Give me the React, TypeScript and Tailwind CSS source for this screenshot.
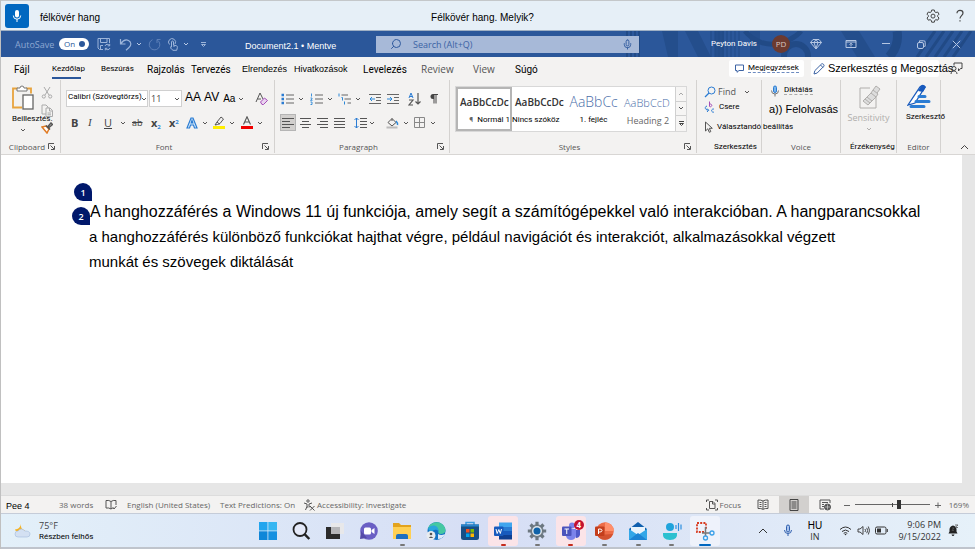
import React from "react";
import { Search, Mic } from "lucide-react";

type IconProps = { box: string; className: string; children: React.ReactNode };

function Icon({ box, className, children }: IconProps) {
  return (
    <svg viewBox={box} className={`shrink-0 ${className}`} fill="none" stroke="currentColor" strokeWidth="1" aria-hidden="true">
      {children}
    </svg>
  );
}

function Chevron({ className = "text-[#555]" }: { className?: string }) {
  return (
    <Icon box="0 0 6 6" className={`size-[6px] ${className}`}>
      <path d="M1 2l2 2 2-2" />
    </Icon>
  );
}

function Launcher() {
  return (
    <button type="button" aria-label="More options" className="text-[#555]">
      <Icon box="0 0 7 7" className="size-[7px]">
        <path d="M.5 6V.5H6M2.500 2.500l3.500 3.500M6.500 3v3.500H3" />
      </Icon>
    </button>
  );
}

function VoiceBar() {
  return (
    <header className="flex h-[31px] shrink-0 items-center border-t border-b border-t-[#c4c7ca] border-b-[#9fb0c4] bg-[#e6eff7] px-1 text-[10px] leading-none text-black">
      <button type="button" aria-label="Microphone" className="grid size-6 place-items-center rounded-[3px] bg-[#0067c0]">
        <Icon box="0 0 12 14" className="h-[14px] w-3 text-white">
          <rect x="4" y="1" width="4" height="7.500" rx="2" fill="currentColor" stroke="none" />
          <path d="M2.300 6.500a3.700 3.700 0 0 0 7.400 0M6 10.200V13" />
        </Icon>
      </button>
      <p className="w-0 flex-1 pt-1 pl-[11px] font-['Liberation_Sans',sans-serif] whitespace-nowrap">félkövér hang</p>
      <p className="pt-1 pr-10 font-['Liberation_Sans',sans-serif] whitespace-nowrap">Félkövér hang. Melyik?</p>
      <div className="flex w-0 flex-1 items-center justify-end gap-[15px] pr-[6px] text-[#444]">
        <button type="button" aria-label="Settings">
          <Icon box="0 0 14 14" className="size-[14px]">
            <path d="M5.700 1h2.600l.4 1.800 1.200.7 1.800-.5L13 5.200 11.700 6.500v1.200L13 9l-1.300 2.200-1.800-.5-1.200.7-.4 1.800H5.700l-.4-1.800-1.200-.7-1.800.5L1 9l1.300-1.300V6.500L1 5.200 2.300 3l1.800.5 1.200-.7z" strokeLinejoin="round" />
            <circle cx="7" cy="7.100" r="2" />
          </Icon>
        </button>
        <button type="button" aria-label="Help">
          <Icon box="0 0 10 14" className="h-[14px] w-[10px]">
            <path d="M2 4.200C2 2.300 3.300 1.400 5 1.400s3 1 3 2.700C8 6.500 5 6.700 5 9.500M5 11.200v1.400" strokeWidth="1.200" />
          </Icon>
        </button>
      </div>
    </header>
  );
}

function TitlePattern() {
  return (
    <svg viewBox="0 0 350 26" className="absolute top-0 right-0 h-[26px] w-[350px]" fill="none" stroke="#214a86" aria-hidden="true">
      <path d="M2 0v26M6 0v26M10 0v26M14 0v26" strokeWidth="2" />
      <path d="M37 0h16v26H43zM60 0h13l13 26H73zM90 0h9v26h-9z" fill="#244e8c" stroke="none" />
      <path d="M86 0v26M90 0v26M94 0v26M98 0v26M102 0v26M106 0v26M110 0v26M114 0v26" strokeWidth="1" />
      <path d="M125 0v26h10V0" fill="#244e8c" stroke="none" />
      <circle cx="171" cy="25" r="12" strokeWidth="6" />
      <path d="M120 0c8 10 22 16 36 12S176 0 176 0" strokeWidth="5" />
      <path d="M216 0h18l16 26h-18z" fill="#244e8c" stroke="none" />
      <path d="M272 0c2 10-2 20-8 26" strokeWidth="9" />
      <path d="M292 26l18-26M301 26l18-26M310 26l18-26M319 26l18-26M328 26l18-26" strokeWidth="3" />
    </svg>
  );
}

function TitleBar() {
  return (
    <div className="relative flex h-[26px] shrink-0 items-center bg-[#2b579a] text-[#9db5da]">
      <TitlePattern />
      <div className="relative flex w-[375px] shrink-0 items-center">
        <label className="flex items-center gap-1 pl-[14px] text-[9px] leading-none text-[#8ea8d2]">
          <span className="w-10 whitespace-nowrap">AutoSave</span>
          <span className="relative flex">
            <input type="checkbox" role="switch" defaultChecked className="h-3 w-[30px] appearance-none rounded-full bg-white" />
            <span className="absolute top-[2px] left-[5px] text-[8px] leading-none text-[#2b579a]">On</span>
            <span className="absolute top-[3px] right-1 size-[6px] rounded-full bg-[#2b579a]" />
          </span>
        </label>
        <button type="button" aria-label="Save" className="ml-2">
          <Icon box="0 0 14 14" className="size-[14px]">
            <path d="M6 12.500H2.500L1 11V1.500h11.500V6M3.500 1.500v4h6.500v-4M3.500 12V8.500H6M8 9a2.500 2.500 0 0 1 4.500-.5M12.700 6.800v2h-2M13 11a2.500 2.500 0 0 1-4.500.5M8.300 13.300v-2h2" />
          </Icon>
        </button>
        <button type="button" aria-label="Undo" className="ml-2 flex items-center gap-1">
          <Icon box="0 0 13 13" className="size-[13px]">
            <path d="M1.500 1v5h5M1.700 5.800C4 2.500 7 1.300 9.500 2.500c3 1.500 3 5 .5 7L7 12.300" strokeWidth="1.200" />
          </Icon>
          <Chevron className="text-[#b8c9e6]" />
        </button>
        <button type="button" aria-label="Redo" className="ml-[6px] text-[#5d80b8]">
          <Icon box="0 0 13 13" className="size-[13px]">
            <path d="M4.500 1.700A5.300 5.300 0 1 0 9.500 2.200M9 5V1.500h3.500" />
          </Icon>
        </button>
        <button type="button" aria-label="Touch mode" className="ml-[6px] flex items-center gap-1">
          <Icon box="0 0 12 13" className="h-[13px] w-3">
            <path d="M2.500 6.500A3.500 3.500 0 1 1 8 6M4.500 9V4a1 1 0 0 1 2 0v3l3 .8c1 .3 1 1 .8 2l-.6 2.500H6L3 9.500q.5-1 1.500-.3M7 7v2" />
          </Icon>
          <Chevron className="text-[#b8c9e6]" />
        </button>
        <button type="button" aria-label="Customize toolbar" className="ml-[11px]">
          <Icon box="0 0 7 7" className="size-[7px]">
            <path d="M1 1.500h5M1.500 3.500l2 2 2-2z" />
          </Icon>
        </button>
        <h1 className="ml-[38px] pt-1 font-['Liberation_Sans',sans-serif] text-[9px] leading-none whitespace-nowrap text-white">Document2.1 • Mentve</h1>
      </div>
      <label className="relative flex h-[17px] min-w-0 flex-1 items-center gap-[11px] bg-[#a7b9d8] px-[14px] text-[#2f5a9e]">
        <Search className="size-[12px] -scale-x-100" strokeWidth={2} />
        <input type="text" aria-label="Search" placeholder="Search (Alt+Q)" className="w-0 flex-1 bg-transparent text-[9px] leading-none outline-none placeholder:text-[#3c63a4] placeholder:opacity-100" />
        <Mic className="-mr-2 size-[11px]" strokeWidth={2} />
      </label>
      <div className="relative flex w-[336px] shrink-0 items-center justify-end pr-[14px] text-[#b5c6e2]">
        <span className="font-[Roboto,sans-serif] text-[8px] leading-none whitespace-nowrap text-white">Peyton Davis</span>
        <span className="ml-[15px] grid size-[18px] place-items-center rounded-full bg-[#6c3a30] text-[8px] leading-none text-[#d9c5c0]">PD</span>
        <button type="button" aria-label="Premium" className="ml-5">
          <Icon box="0 0 12 12" className="size-3">
            <path d="M3 1.500h6l2.500 3L6 11 .5 4.500zM.5 4.500h11M4 4.500l2 6 2-6-2-3z" />
          </Icon>
        </button>
        <button type="button" aria-label="Ribbon display" className="ml-[23px]">
          <Icon box="0 0 12 10" className="h-[10px] w-3">
            <path d="M1 1.500h10v7H1zM1 3h10M6 7.500V4.500M4.500 5.700L6 4.200l1.500 1.500" />
          </Icon>
        </button>
        <button type="button" aria-label="Minimize" className="ml-[25px]">
          <Icon box="0 0 8 8" className="size-2"><path d="M0 3.500h8" /></Icon>
        </button>
        <button type="button" aria-label="Restore" className="ml-[27px]">
          <Icon box="0 0 9 9" className="size-[9px]">
            <rect x=".5" y="2.500" width="6" height="6" rx="1.500" /><path d="M2.500 2V.8h4a1.500 1.500 0 0 1 1.700 1.500v4H7" />
          </Icon>
        </button>
        <button type="button" aria-label="Close" className="ml-[26px]">
          <Icon box="0 0 9 9" className="size-[9px]"><path d="M.8.8l7.400 7.400M8.200.8L.8 8.200" /></Icon>
        </button>
      </div>
    </div>
  );
}

const hu = "font-[Roboto,sans-serif] text-black";

const tabs = [
  { label: "Fájl", className: "w-[38px] text-[10px] pt-[2px] " + hu },
  { label: "Kezdőlap", className: "w-[49px] text-[8px] " + hu, active: true },
  { label: "Beszúrás", className: "w-[46px] text-[8px] " + hu },
  { label: "Rajzolás", className: "w-[44px] text-[10px] pt-[2px] " + hu },
  { label: "Tervezés", className: "w-[51px] text-[10px] pt-[2px] " + hu },
  { label: "Elrendezés", className: "w-[52px] text-[9px] pt-[2px] text-black font-['Liberation_Sans',sans-serif]" },
  { label: "Hivatkozások", className: "w-[69px] text-[9px] pt-[2px] text-black font-['Liberation_Sans',sans-serif]" },
  { label: "Levelezés", className: "w-[58px] text-[10px] pt-[2px] " + hu },
  { label: "Review", className: "w-[52px] text-[10px] text-[#555]" },
  { label: "View", className: "w-[42px] text-[10px] text-[#555]" },
  { label: "Súgó", className: "w-[42px] text-[10px] pt-[2px] " + hu },
];

function TabRow() {
  return (
    <nav className="flex h-[23px] shrink-0 items-center pl-[13px] leading-none">
      {tabs.map((t) => (
        <button key={t.label} type="button" className={`relative h-[23px] shrink-0 text-left whitespace-nowrap ${t.className}`}>
          {t.label}
          {t.active && <span className="absolute bottom-[1px] left-0 h-[2px] w-[29px] bg-[#2b579a]" />}
        </button>
      ))}
      <div className="ml-auto flex items-center gap-[7px] pr-3">
        <button type="button" className="flex h-[17px] w-[75px] items-center gap-1 rounded-[2px] bg-white pl-[6px]">
          <Icon box="0 0 9 9" className="size-[9px] text-[#3c63a4]"><path d="M.5 1h8v5.500H4L2 8.300V6.500H.5z" /></Icon>
          <span className="border-b border-dashed border-[#6d8bc0] font-[Roboto,sans-serif] text-[8px] whitespace-nowrap">Megjegyzések</span>
        </button>
        <button type="button" className="flex h-[17px] w-[128px] items-center gap-[3px] rounded-[2px] bg-white pl-[2px]">
          <Icon box="0 0 12 12" className="size-3 text-[#3c63a4]"><path d="M1 11l.8-3.300L8.500 1q1-.7 2 .3t.3 2L4.200 10zM7.500 2l2.500 2.500" /></Icon>
          <span className="font-['Liberation_Sans',sans-serif] text-[11px] whitespace-nowrap text-black">Szerkesztés g Megosztás</span>
        </button>
        <button type="button" aria-label="Feedback" className="ml-1 text-[#444]">
          <Icon box="0 0 13 13" className="size-[13px]"><path d="M4 3.500V1h8v5.500h-1.500L8.500 9V6.500M1 12c0-4 6-4 6 0" /><circle cx="4" cy="6.500" r="2" /></Icon>
        </button>
      </div>
    </nav>
  );
}

type GroupProps = { label: string; width: string; children: React.ReactNode; launcher?: boolean; labelClass?: string };

function Group({ label, width, children, launcher, labelClass = "text-[#555]" }: GroupProps) {
  return (
    <section aria-label={label} className={`flex shrink-0 flex-col ${width}`}>
      <div className="h-[61px] border-r border-[#d4d2d0]">{children}</div>
      <div className="flex h-[13px] items-center justify-between border-r border-[#d4d2d0] px-[5px] leading-none">
        <span className={`flex-1 text-center text-[8px] whitespace-nowrap ${labelClass}`}>{label}</span>
        {launcher && <Launcher />}
      </div>
    </section>
  );
}

function ClipboardGroup() {
  return (
    <Group label="Clipboard" width="w-[60px]" launcher>
      <div className="flex pt-[5px]">
        <button type="button" className="flex w-[40px] flex-col items-center gap-1 pl-1">
          <Icon box="0 0 24 26" className="h-[26px] w-6">
            <path d="M7 3.500H2v19h9M15 3.500h5v5" stroke="#e8a33d" strokeWidth="1.800" />
            <path d="M6 6V3h3q0-2 2-2t2 2h3v3z" fill="#fff" stroke="#777" />
            <rect x="12" y="10" width="10" height="14" fill="#fff" stroke="#666" strokeWidth="1.300" />
          </Icon>
          <span className={`self-start pl-[7px] text-[8px] leading-none whitespace-nowrap ${hu}`}>Beillesztés.</span>
          <Chevron />
        </button>
        <div className="flex flex-col gap-[5px] pt-[1px] text-[#aaa]">
          <button type="button" aria-label="Cut">
            <Icon box="0 0 12 13" className="h-[13px] w-3"><path d="M3 1l5 8M9 1L4 9" /><circle cx="2.800" cy="10.500" r="1.600" /><circle cx="9.200" cy="10.500" r="1.600" /></Icon>
          </button>
          <button type="button" aria-label="Copy">
            <Icon box="0 0 12 13" className="h-[13px] w-3"><path d="M5 10H1V1h4l2 2v1M5 4h4l2.500 2.500V12.500H5zM8.500 4v3h3M6.500 9h3.500M6.500 10.800h3.500" /></Icon>
          </button>
          <button type="button" aria-label="Format painter">
            <Icon box="0 0 12 12" className="size-3"><path d="M1 5l4-1 3 3-2 4z" fill="#fff" stroke="#e07b24" strokeWidth="1.500" /><path d="M5 3.500l4 4M7 4.500l3-3.500 1.500 1.500L8 5.500" stroke="#555" strokeWidth="1.500" /></Icon>
          </button>
        </div>
      </div>
    </Group>
  );
}

function FontGroup() {
  return (
    <Group label="Font" width="w-[214px]" launcher>
      <div className="mt-[10px] flex h-[17px] items-center pl-[5px] leading-none text-black">
        <span className="relative flex h-[17px] w-[82px] border border-[#d0d0d0] bg-white">
          <select aria-label="Font name" className="w-full appearance-none bg-transparent pb-1 pl-[1px] font-[Roboto,sans-serif] text-[8px] leading-none outline-none">
            <option>Calibri (Szövegtörzs)</option>
          </select>
          <span className="pointer-events-none absolute right-0 bottom-1"><Chevron /></span>
        </span>
        <span className="relative ml-[1px] flex h-[17px] w-[33px] border border-[#d0d0d0] bg-white">
          <select aria-label="Font size" className="w-full appearance-none bg-transparent pl-[1px] text-[9px] leading-none text-[#444] outline-none">
            <option>11</option>
          </select>
          <span className="pointer-events-none absolute right-[1px] bottom-1"><Chevron /></span>
        </span>
        <button type="button" className="ml-[3px] pb-1 font-['Liberation_Sans',sans-serif] text-[12px]">AA</button>
        <button type="button" className="ml-[3px] pb-1 font-['Liberation_Sans',sans-serif] text-[12px]">AV</button>
        <button type="button" className="ml-[4px] flex items-center gap-[3px] font-['Liberation_Sans',sans-serif] text-[10px]">Aa<Chevron /></button>
        <button type="button" aria-label="Clear formatting" className="ml-[11px] text-[#555]">
          <Icon box="0 0 13 13" className="size-[13px]"><path d="M1 10L5 1l3 6M2.500 7H6" /><path d="M5.500 10l4-4 3 2.500-4 4H7z" fill="#ead4f0" stroke="#a44db8" /></Icon>
        </button>
      </div>
      <div className="mt-[7px] flex h-[17px] items-center pl-[10px] text-[11px] leading-none text-[#444]">
        <button type="button" className="w-[17px] text-left font-bold">B</button>
        <button type="button" className="w-[16px] text-left font-['Liberation_Serif',serif] italic">I</button>
        <button type="button" className="w-[16px] text-left underline">U</button>
        <span className="w-[12px]"><Chevron /></span>
        <button type="button" className="w-[19px] text-left text-[9px] line-through">ab</button>
        <button type="button" className="w-[18px] text-left font-bold">x<sub className="text-[6px] text-[#2b88d8]">2</sub></button>
        <button type="button" className="w-[17px] text-left font-bold">x<sup className="text-[6px] text-[#2b88d8]">2</sup></button>
        <button type="button" aria-label="Text effects" className="flex w-[27px] items-center gap-1">
          <Icon box="0 0 12 12" className="size-3"><path d="M1 11L5 1h2l4 10H8.500l-1-3h-3l-1 3zM5.200 6h1.600L6 3.500z" fill="#d9ecfa" stroke="#2b7cd3" strokeWidth="1.200" /></Icon>
          <Chevron />
        </button>
        <button type="button" aria-label="Highlight" className="flex w-[28px] items-center gap-1">
          <Icon box="0 0 12 13" className="h-[13px] w-3"><path d="M2 9l2-3 4-5 2.500 2L7 7.500 4.500 8.500zM4 6l2.500 2" stroke="#555" /><path d="M0 11.500h12" stroke="#ffee00" strokeWidth="3" /></Icon>
          <Chevron />
        </button>
        <button type="button" aria-label="Font color" className="flex items-center gap-1">
          <Icon box="0 0 12 13" className="h-[13px] w-3"><path d="M2.500 8.500L6 .8l3.500 7.700M3.500 6h5" stroke="#555" strokeWidth="1.100" /><path d="M0 11.500h12" stroke="#f00000" strokeWidth="3" /></Icon>
          <Chevron />
        </button>
      </div>
    </Group>
  );
}

function BulletIcon({ kind }: { kind: "dots" | "numbers" | "levels" }) {
  return (
    <Icon box="0 0 13 12" className="h-3 w-[13px] text-[#666]">
      {kind === "levels" ? (
        <>
          <path d="M3.500 2H10M6.500 6H13M9.500 10H13" />
          <path d="M1 .5v3M3.500 4.500h1v3M6.500 8.500v3" stroke="#2b88d8" />
        </>
      ) : (
        <>
          <path d="M5 2h8M5 6h8M5 10h8" />
          {kind === "dots" ? (
            <path d="M.5 2h2.500M.5 6h2.500M.5 10h2.500" stroke="#2b7cd3" strokeWidth="2.400" />
          ) : (
            <path d="M1.500.5v3M.5 5h1.500v1L.5 7.300h2M.5 9h1.500v2.500H.5" stroke="#2b88d8" strokeWidth=".9" />
          )}
        </>
      )}
    </Icon>
  );
}

function AlignIcon({ d }: { d: string }) {
  return <Icon box="0 0 12 12" className="size-3 text-[#555]"><path d={d} /></Icon>;
}

function ParagraphGroup() {
  return (
    <Group label="Paragraph" width="w-[175px]" launcher>
      <div className="mt-[10px] flex h-[17px] items-center pl-[6px]">
        <button type="button" aria-label="Bullets" className="flex w-[29px] items-center gap-1"><BulletIcon kind="dots" /><Chevron /></button>
        <button type="button" aria-label="Numbering" className="flex w-[28px] items-center gap-1"><BulletIcon kind="numbers" /><Chevron /></button>
        <button type="button" aria-label="Multilevel list" className="flex w-[31px] items-center gap-1"><BulletIcon kind="levels" /><Chevron /></button>
        <button type="button" aria-label="Decrease indent" className="w-[18px]">
          <Icon box="0 0 12 12" className="size-3 text-[#666]"><path d="M0 1.500h12M7 4.500h5M7 7.500h5M0 10.500h12" /><path d="M6 6H1M3 4L1 6l2 2" stroke="#2b88d8" /></Icon>
        </button>
        <button type="button" aria-label="Increase indent" className="w-[21px]">
          <Icon box="0 0 12 12" className="size-3 text-[#666]"><path d="M0 1.500h12M7 4.500h5M7 7.500h5M0 10.500h12" /><path d="M0 6h5M3 4l2 2-2 2" stroke="#2b88d8" /></Icon>
        </button>
        <button type="button" aria-label="Sort" className="w-[22px]">
          <Icon box="0 0 13 14" className="h-[14px] w-[13px] text-[#555]"><path d="M1 6l2-5 2 5M1.700 4.500h2.600" stroke="#2b7cd3" /><path d="M1 8h4l-4 5h4M10 1v11M7.500 9.500L10 12l2.500-2.500" strokeWidth="1.200" /></Icon>
        </button>
        <button type="button" aria-label="Show marks" className="text-[#444]">
          <Icon box="0 0 8 11" className="h-[11px] w-2"><path d="M4 1.500v9M6 1.500v9M3 1.500h5" /><path d="M4 1H3a2.500 2.500 0 0 0 0 5h1z" fill="currentColor" stroke="none" /></Icon>
        </button>
      </div>
      <div className="mt-[7px] flex h-[17px] items-center pl-[5px]">
        <button type="button" aria-label="Align left" className="grid h-[17px] w-4 place-items-center border border-[#b5b5b5] bg-[#d2d0ce]"><AlignIcon d="M0 1.500h12M0 4.500h8M0 7.500h12M0 10.500h8" /></button>
        <button type="button" aria-label="Center" className="ml-1 w-[17px]"><AlignIcon d="M0 1.500h11M2 4.500h7M0 7.500h11M2 10.500h7" /></button>
        <button type="button" aria-label="Align right" className="w-[17px]"><AlignIcon d="M0 1.500h11M3 4.500h8M0 7.500h11M3 10.500h8" /></button>
        <button type="button" aria-label="Justify" className="w-[20px]"><AlignIcon d="M0 1.500h11M0 4.500h11M0 7.500h11M0 10.500h11" /></button>
        <button type="button" aria-label="Line spacing" className="flex w-[32px] items-center gap-[2px]">
          <Icon box="0 0 13 12" className="h-3 w-[13px] text-[#555]"><path d="M6 1.500h7M6 4.500h7M6 7.500h7M6 10.500h7" /><path d="M2.500 1v10M.5 3l2-2 2 2M.5 9l2 2 2-2" stroke="#2b7cd3" /></Icon>
          <Chevron />
        </button>
        <button type="button" aria-label="Shading" className="flex w-[27px] items-center gap-1">
          <Icon box="0 0 13 12" className="h-3 w-[13px] text-[#555]"><path d="M2 5.500L6 1.500l4 4-4 3.500zM6 1.500V4" /><path d="M10 4q2 2 1.500 4" stroke="#2b88d8" strokeWidth="1.500" /><path d="M.5 10.500h11" stroke="#bbb" strokeWidth="2" /></Icon>
          <Chevron />
        </button>
        <button type="button" aria-label="Borders" className="flex items-center gap-1">
          <Icon box="0 0 13 13" className="size-[13px] text-[#888]"><path d="M1.500 1.500h10v10h-10zM6.500 1.500v10M1.500 6.500h10" /></Icon>
          <Chevron />
        </button>
      </div>
    </Group>
  );
}

const styleCards = [
  { sample: "AaBbCcDc", name: "Normál 1", mark: true, sampleClass: "mt-1 text-[10px] font-semibold text-[#333]", nameClass: "self-end text-[8px] " + hu, box: "w-[56px] border-2 border-[#b5b5b5]" },
  { sample: "AaBbCcDc", name: "Nincs szóköz", sampleClass: "mt-[6px] text-[10px] font-semibold text-[#333]", nameClass: "self-start text-[8px] " + hu, box: "w-[54px]" },
  { sample: "AaBbCc", name: "1. fejléc", sampleClass: "mt-[6px] text-[14px] font-light text-[#4a6ea9]", nameClass: "text-[8px] " + hu, box: "w-[55px]" },
  { sample: "AaBbCcD", name: "Heading 2", sampleClass: "mt-[6px] text-[11px] font-light text-[#4a6ea9]", nameClass: "text-[9px] text-[#666]", box: "w-[54px]" },
];

function StylesGroup() {
  return (
    <Group label="Styles" width="w-[247px]" launcher>
      <div className="mt-[6px] ml-[5px] flex h-[46px] w-[232px] border border-[#d8d8d8] bg-white">
        {styleCards.map((c) => (
          <button key={c.name} type="button" className={`flex flex-col items-center leading-none whitespace-nowrap ${c.box}`}>
            <span className={`flex h-[18px] w-[48px] items-center ${c.sampleClass}`}>{c.sample}</span>
            <span className={`mt-[2px] flex h-[14px] items-center gap-1 ${c.nameClass}`}>{c.mark && <span className="text-[#666]">¶</span>}{c.name}</span>
          </button>
        ))}
        <div className="ml-auto grid w-[11px] grid-rows-3 divide-y divide-[#d0d0d0] border-l border-[#d0d0d0] bg-[#f6f5f4]">
          <button type="button" aria-label="Previous styles" className="grid place-items-center"><Icon box="0 0 6 6" className="size-[6px] text-[#aaa]"><path d="M1 4l2-2 2 2" /></Icon></button>
          <button type="button" aria-label="Next styles" className="grid place-items-center"><Chevron /></button>
          <button type="button" aria-label="All styles" className="grid place-items-center"><Icon box="0 0 7 7" className="size-[7px] text-[#444]"><path d="M1 1.500h5M1.500 3.500l2 2 2-2z" /></Icon></button>
        </div>
      </div>
    </Group>
  );
}

function EditingGroup() {
  return (
    <Group label="Szerkesztés" width="w-[65px]" labelClass="pl-3 font-[Roboto,sans-serif] text-black">
      <div className="flex flex-col items-start pt-[3px] pl-[7px] leading-none whitespace-nowrap">
        <button type="button" className="flex h-[17px] items-center gap-[2px] text-[9px] text-[#555]">
          <Icon box="0 0 12 12" className="size-3"><circle cx="7.500" cy="4.500" r="3.500" stroke="#2b7cd3" /><path d="M5 7L1 11" stroke="#2b7cd3" strokeWidth="1.300" /></Icon>
          Find<span className="pl-[6px]"><Chevron /></span>
        </button>
        <button type="button" className={`flex h-[14px] items-center gap-1 text-[8px] ${hu}`}>
          <Icon box="0 0 11 13" className="h-[13px] w-[11px]"><path d="M5.500.5v5M5.500 3.500a1.300 1.300 0 1 1 0 1.800" stroke="#a44db8" /><path d="M10 8.200a1.600 1.600 0 1 0 0 2.800M3 5C.5 5.500.5 9 4.500 9.200M3 7.500l1.700 1.700L3 11" stroke="#2b7cd3" /></Icon>
          Csere
        </button>
        <button type="button" className={`flex h-[25px] items-center gap-1 text-[8px] ${hu}`}>
          <Icon box="0 0 9 12" className="h-3 w-[9px] text-[#555]"><path d="M1.500 1v9l2.300-2.200 1.500 3.500 1.500-.7-1.500-3.300h3z" /></Icon>
          Választandó beállítás
        </button>
      </div>
    </Group>
  );
}

function VoiceGroup() {
  return (
    <Group label="Voice" width="w-[79px]">
      <div className="flex flex-col items-start pt-[3px] pl-[7px] leading-none whitespace-nowrap">
        <button type="button" className={`flex h-[15px] items-center gap-1 pl-[1px] text-[8px] ${hu}`}>
          <Icon box="0 0 10 12" className="h-3 w-[10px] text-[#2b7cd3]"><rect x="3.500" y="1" width="3" height="6.500" rx="1.500" fill="#7ab4ea" /><path d="M1.500 5.500a3.500 3.500 0 0 0 7 0M5 9v2.500" stroke="#777" /></Icon>
          <span className="border-b border-dashed border-[#aaa]">Diktálás</span>
        </button>
        <button type="button" className="h-[22px] font-['Liberation_Sans',sans-serif] text-[11px] text-black">a)) Felolvasás</button>
      </div>
    </Group>
  );
}

function SensitivityGroup() {
  return (
    <Group label="Érzékenység" width="w-[56px]" labelClass="pl-1 font-[Roboto,sans-serif] text-black">
      <button type="button" disabled className="flex w-full flex-col items-center gap-1 pt-[4px] text-[9px] leading-none text-[#b0aeac]">
        <Icon box="0 0 24 25" className="h-[25px] w-6">
          <path d="M13 4H3v20h16v-11" />
          <path d="M6 17l8-8 5 4-8 8zM14 9l2-3 5 4-2 3M16 6l3-4 4 3-3 4M8 15l5 4M10 13l5 4" fill="#ddd" />
        </Icon>
        <span>Sensitivity</span>
        <Chevron className="text-[#b0aeac]" />
      </button>
    </Group>
  );
}

function EditorGroup() {
  return (
    <Group label="Editor" width="w-[44px]">
      <button type="button" className={`flex w-full flex-col items-center gap-1 pt-[4px] text-[8px] leading-none whitespace-nowrap ${hu}`}>
        <Icon box="0 0 24 25" className="h-[25px] w-6">
          <path d="M1 21L13 3q3-3 5 0L8 19z" fill="#fff" stroke="#185abd" strokeWidth="1.300" />
          <path d="M11 7l3-5q3-2 5 1l-3 5z" fill="#185abd" stroke="none" />
          <path d="M12 12.500h6M9 17.500h13M4 22.500h13" stroke="#2b7cd3" strokeWidth="3" strokeLinecap="round" />
        </Icon>
        <span className="self-start pl-[9px]">Szerkesztő</span>
      </button>
    </Group>
  );
}

function Ribbon() {
  return (
    <div className="flex h-[74px] shrink-0 pb-[1px]">
      <ClipboardGroup />
      <FontGroup />
      <ParagraphGroup />
      <StylesGroup />
      <EditingGroup />
      <VoiceGroup />
      <SensitivityGroup />
      <EditorGroup />
      <button type="button" aria-label="Collapse ribbon" className="mt-auto mr-[6px] mb-[1px] ml-auto text-[#444]">
        <Icon box="0 0 9 9" className="size-[9px]"><path d="M1 6l3.500-3.500L8 6" /></Icon>
      </button>
    </div>
  );
}

const badge = "absolute grid size-[18px] place-items-center rounded-full rounded-br-none bg-[#00186b] font-['Open_Sans',sans-serif] text-[9px] leading-none font-semibold text-white";

function DocumentArea() {
  return (
    <main className="flex min-h-0 flex-1 border-t border-[#d8d6d4] bg-[#e6e6e6] pr-[13px] pb-3 text-black">
      <article className="flex-1 bg-white pt-[44px] pl-[88px] font-['Liberation_Sans',sans-serif] leading-[25px] whitespace-nowrap">
        <p className="relative">
          <span className={`-top-4 -left-[15px] ${badge}`}>1</span>
          <span className={`top-2 -left-[17px] ${badge}`}>2</span>
          <span className="block pl-[1px] text-[16px]">A hanghozzáférés a Windows 11 új funkciója, amely segít a számítógépekkel való interakcióban. A hangparancsokkal</span>
          <span className="block text-[15px]">a hanghozzáférés különböző funkciókat hajthat végre, például navigációt és interakciót, alkalmazásokkal végzett</span>
          <span className="block text-[15px]">munkát és szövegek diktálását</span>
        </p>
      </article>
    </main>
  );
}

function StatusBar() {
  return (
    <footer className="flex h-[18px] shrink-0 items-center border-t border-[#dcdcdc] bg-[#f3f2f1] text-[8px] leading-none whitespace-nowrap text-[#666]">
      <span className="w-[53px] pt-1 pl-[5px] font-['Liberation_Sans',sans-serif] text-[9px] text-black">Pee 4</span>
      <span className="w-[51px] pl-[5px]">38 words</span>
      <Icon box="0 0 12 11" className="h-[11px] w-3 text-[#555]"><path d="M6 2.500Q4 1 1 1.500V9q3-.5 5 1 1-1 2.500-1M6 2.500Q8 1 11 1.500V6M6 2.500V10M8 8.500l1 1.500 2.500-3" /></Icon>
      <button type="button" className="ml-[10px] w-[93px] text-left">English (United States)</button>
      <button type="button" className="w-[83px] text-left">Text Predictions: On</button>
      <button type="button" className="flex items-center gap-[2px]">
        <Icon box="0 0 12 12" className="size-3 text-[#555]"><circle cx="5" cy="2" r="1.200" /><path d="M1 4l3 1v2.500L2.500 11M9 4L6 5v2l1 1.500M3.500 8h2M7 7l4.500 4.500M11.500 7L7 11.500" /></Icon>
        Accessibility: Investigate
      </button>
      <div className="ml-auto flex h-full items-center">
        <button type="button" className="flex items-center gap-[2px]">
          <Icon box="0 0 12 12" className="size-3 text-[#555]"><path d="M.5 3V1H3M9 1h2.500v2M.5 9v2H3M9 11h2.500V9M3.500 2.500h3.500l2 2v5h-5.500zM6.500 2.500v2.500h2.500" /></Icon>
          Focus
        </button>
        <button type="button" aria-label="Read mode" className="ml-[16px] text-[#555]">
          <Icon box="0 0 12 11" className="h-[11px] w-3"><path d="M6 2Q4 .8 1 1v8.500q3-.3 5 .8 2-1.100 5-.8V1Q8 .8 6 2v8.300M2.500 3.500H4.500M2.500 5.500H4.500M2.500 7.500H4.500M7.500 3.500h2M7.500 5.500h2M7.500 7.500h2" /></Icon>
        </button>
        <button type="button" aria-label="Print layout" className="ml-[10px] grid h-full w-[30px] place-items-center bg-[#d2d0ce] text-[#444]">
          <Icon box="0 0 10 12" className="h-3 w-[10px]"><path d="M1 .5h8v11H1zM2.500 3h5M2.500 5h5M2.500 7h5M2.500 9h5" /></Icon>
        </button>
        <button type="button" aria-label="Web layout" className="ml-[10px] text-[#555]">
          <Icon box="0 0 12 12" className="size-3"><path d="M5 10H1V1h10v3M3 3.500h6M3 5.500h2M3 7.500h2" /><circle cx="8.500" cy="8" r="3" fill="#555" /><path d="M6 8h5M8.500 5.500v5" stroke="#ddd" strokeWidth=".6" /></Icon>
        </button>
        <button type="button" aria-label="Zoom out" className="ml-[13px]"><Icon box="0 0 6 6" className="size-[6px]"><path d="M0 3.500h6" /></Icon></button>
        <span className="relative mx-[5px] flex items-center">
          <span className="absolute left-[37px] h-1 w-[1px] bg-[#444]" />
          <input type="range" aria-label="Zoom" min={10} max={260} defaultValue={158} className="h-[11px] w-[75px] appearance-none bg-transparent [&::-webkit-slider-runnable-track]:h-[1px] [&::-webkit-slider-runnable-track]:bg-[#666] [&::-webkit-slider-thumb]:-mt-1 [&::-webkit-slider-thumb]:h-[9px] [&::-webkit-slider-thumb]:w-1 [&::-webkit-slider-thumb]:appearance-none [&::-webkit-slider-thumb]:bg-[#333]" />
        </span>
        <button type="button" aria-label="Zoom in"><Icon box="0 0 6 6" className="size-[6px]"><path d="M0 3.500h6M3 .5v6" /></Icon></button>
        <span className="w-[34px] pr-[6px] text-right">169%</span>
      </div>
    </footer>
  );
}

type TaskApp = { name: string; art: React.ReactNode; tile?: string; mark?: string };

const apps: TaskApp[] = [
  { name: "Start", art: <><path d="M1 1h8.500v8.500H1z" fill="#22a5ee" /><path d="M10.300 1H19v8.500h-8.700z" fill="#35b6f2" /><path d="M1 10.300h8.500V19H1z" fill="#0f86d8" /><path d="M10.300 10.300H19V19h-8.700z" fill="#1590e0" /></> },
  { name: "Search", art: <><circle cx="9" cy="8.500" r="6.500" fill="#e4e9f8" stroke="#222" strokeWidth="1.800" /><path d="M13.800 13.300l4.500 4.700" stroke="#222" strokeWidth="2.400" /></> },
  { name: "Task view", art: <><path d="M1 6h14v12H1z" fill="#2b2b2b" /><path d="M6 2h13v11H6z" fill="#e8e8ea" /><path d="M6 6h9v7H6z" fill="#b5b5b8" /></> },
  { name: "Chat", art: <><circle cx="10" cy="10" r="8.800" fill="#6a5fc4" /><path d="M1 18l1-8 6 7z" fill="#554aa8" /><rect x="5" y="6.500" width="7" height="7" rx="1.500" fill="#fff" /><path d="M12.500 9l3-2v6l-3-2z" fill="#fff" /></> },
  { name: "Files", mark: "w-[5px] bg-[#777]", art: <><path d="M1 2h6l2 2h10v14H1z" fill="#e3a31e" /><path d="M1 6h18v12H1z" fill="#ffd054" /><path d="M4 18v-3q0-2 2-2h8q2 0 2 2v3z" fill="#1c6fc0" /></> },
  { name: "Edge", art: <><circle cx="10.500" cy="10" r="9" fill="#1272c4" /><path d="M2 8C4-1 18-1 19.500 9q0 4-5 4-3-.5-2-3C12 5 5 4 2 8z" fill="#45c8a2" /><path d="M2 8C5 2 13 4 12.500 10c-2-2-6-2-7 2z" fill="#2aa5dc" /><path d="M12 13q3 2 7 0-2 5-7 5z" fill="#dce8f8" /><circle cx="5" cy="14.500" r="4.500" fill="#e8ebee" /><circle cx="5" cy="13" r="1.300" fill="#555" /><path d="M2.800 17q2.200-3 4.400 0z" fill="#555" /></> },
  { name: "Store", art: <><path d="M6 4V1.500h8V4" fill="none" stroke="#3a9be0" strokeWidth="1.500" /><path d="M1 3.500h18v13q0 2.500-2.500 2.500h-13Q1 19 1 16.500z" fill="#174f86" /><path d="M1 3.500h18v2H1z" fill="#2786cc" /><path d="M6 8h3.500v3.500H6z" fill="#f25022" /><path d="M10.500 8H14v3.500h-3.500z" fill="#7fba00" /><path d="M6 12.500h3.500V16H6z" fill="#00a4ef" /><path d="M10.500 12.500H14V16h-3.500z" fill="#ffb900" /></> },
  { name: "Word", tile: "bg-[#fbe4e8]", mark: "w-[5px] bg-[#c42b1c]", art: <><path d="M6 1.500h13v5H6z" fill="#41a5ee" /><path d="M6 6h13v4.500H6z" fill="#2b7cd3" /><path d="M6 10h13v4.500H6z" fill="#185abd" /><path d="M6 14h13v4.500H6z" fill="#103f91" /><rect x="1" y="5.500" width="9.500" height="9.500" rx="1" fill="#185abd" /><path d="M3 8l1.200 4.500L5.800 8.500l1.500 4L8.500 8" fill="none" stroke="#fff" /></> },
  { name: "Settings", mark: "w-[5px] bg-[#777]", art: <><circle cx="10" cy="10" r="6.800" fill="#7b8790" /><path d="M10 .8v18.400M.8 10h18.400M3.500 3.500l13 13M16.500 3.500l-13 13" stroke="#6c7780" strokeWidth="3.200" /><circle cx="10" cy="10" r="5" fill="#dfe5ea" /><circle cx="10" cy="10" r="3.500" fill="#0f62a8" /></> },
  { name: "Teams", tile: "bg-[#fbe4e8]", mark: "w-[5px] bg-[#c42b1c]", art: <><circle cx="11" cy="4.500" r="3" fill="#7b83eb" /><circle cx="16.500" cy="6" r="2" fill="#5059c9" /><path d="M13 9h6v5q-1 3-4 3z" fill="#5059c9" /><path d="M6 8h9v7q-1 4-5 4t-5-4z" fill="#7b83eb" /><rect x="1" y="5.500" width="9.500" height="9.500" rx="1" fill="#4b53bc" /><path d="M3.500 8h4.500M5.750 8v5" stroke="#fff" /></> },
  { name: "PowerPoint", mark: "w-[5px] bg-[#777]", art: <><circle cx="11" cy="10" r="8.800" fill="#ed6c47" /><path d="M11 1.200A8.800 8.800 0 0 1 19.800 10H11z" fill="#ff8f6b" /><path d="M3 14a8.800 8.800 0 0 0 16-1z" fill="#d35230" /><rect x="1" y="5.500" width="9.500" height="9.500" rx="1" fill="#c43e1c" /><path d="M4.500 13V8h1.500q2 0 2 1.500T6 11H4.500" fill="none" stroke="#fff" /></> },
  { name: "Mail", mark: "w-[5px] bg-[#777]", art: <><path d="M1 8l9-7 9 7v11H1z" fill="#0f5fae" /><path d="M3 6h14v8H3z" fill="#e8f3fc" /><path d="M1 8l9 6 9-6v11H1z" fill="#33a7e8" /><path d="M1 19l9-7 9 7z" fill="#1d84d4" /></> },
  { name: "Voice access", mark: "w-[5px] bg-[#777]", art: <><circle cx="8" cy="6" r="4" fill="#20a4dc" /><path d="M1 12h14q1 7-7 7t-7-7z" fill="#2cc0d0" /><path d="M14 4v4M16.500 2v8M19 3.500v5" stroke="#2d8fe0" strokeWidth="1.200" /></> },
  { name: "Snipping tool", tile: "bg-[#eef2fb]", mark: "w-[12px] bg-[#0067c0]", art: <><path d="M9 11H2V2h9v6" fill="none" stroke="#d83b20" strokeWidth="1.800" strokeDasharray="2 1.200" /><path d="M7 12h8M10.500 6v9" stroke="#777" strokeWidth="1.500" /><circle cx="17" cy="12" r="2" fill="none" stroke="#3aa0e8" strokeWidth="1.300" /><circle cx="10.500" cy="17" r="2" fill="none" stroke="#3aa0e8" strokeWidth="1.300" /></> },
];

function Taskbar() {
  return (
    <div className="flex h-[36px] shrink-0 items-center border-t border-b-2 border-t-[#c5ccd8] border-b-[#bfc4cc] bg-linear-to-r from-[#e3f0f9] via-[#d6def5] to-[#e6f1f9] leading-none">
      <div className="flex w-0 flex-1 items-center gap-2 pl-[13px] whitespace-nowrap">
        <Icon box="0 0 17 15" className="h-[15px] w-[17px]">
          <path d="M7 1q-1 5 4 6.500Q7 11 4 8 1 8 1 6.500 6 6 7 1z" fill="#f5b324" stroke="none" />
          <path d="M4 14a3 3 0 0 1 0-6q3-4 7 0 5 0 5 3t-3 3z" fill="#d3e0f2" stroke="#a3bbdc" strokeWidth=".6" />
        </Icon>
        <div className="flex flex-col gap-[3px]">
          <span className="text-[9px] text-[#444]">75°F</span>
          <span className={`text-[8px] ${hu}`}>Részben felhős</span>
        </div>
      </div>
      <nav className="flex w-[468px] justify-between">
        {apps.map((a) => (
          <button key={a.name} type="button" aria-label={a.name} className={`relative flex h-[30px] w-[30px] flex-col items-center rounded-[3px] pt-[5px] ${a.tile ?? ""}`}>
            <svg viewBox="0 0 20 20" className="size-[20px]" aria-hidden="true">{a.art}</svg>
            {a.mark && <span className={`absolute bottom-0 h-[2px] rounded-full ${a.mark}`} />}
            {a.name === "Teams" && <span className="absolute top-1 right-[2px] grid size-[10px] place-items-center rounded-full bg-[#c4122f] text-[8px] font-bold text-white">4</span>}
          </button>
        ))}
      </nav>
      <div className="flex w-0 flex-1 items-center justify-end pr-4 whitespace-nowrap text-[#333]">
        <button type="button" aria-label="Hidden icons"><Icon box="0 0 10 10" className="size-[10px]"><path d="M1 7l4-4 4 4" /></Icon></button>
        <Icon box="0 0 10 13" className="ml-[15px] h-[13px] w-[10px] text-[#2f5fae]"><rect x="3.500" y="1" width="3" height="7" rx="1.500" fill="#a9c4ee" /><path d="M1.500 6a3.500 3.500 0 0 0 7 0M5 9.500V12" /></Icon>
        <div className="ml-[14px] flex w-4 flex-col items-center gap-[1px] text-[9px]">
          <span className="font-['Liberation_Sans',sans-serif] text-[10px] text-black">HU</span>
          <span>IN</span>
        </div>
        <Icon box="0 0 13 11" className="ml-[16px] h-[11px] w-[13px]"><path d="M1 4.500q5.500-5 11 0M3 6.500q3.500-3 7 0M4.700 8.300q1.800-1.500 3.600 0" /><circle cx="6.500" cy="9.500" r=".8" fill="currentColor" stroke="none" /></Icon>
        <Icon box="0 0 13 11" className="ml-[5px] h-[11px] w-[13px]"><path d="M1 4h2l3-2.500v8L3 7H1zM8 4q1 1.500 0 3M9.700 2.800q2 2.700 0 5.400M11.300 1.500q2.500 4 0 8" strokeWidth=".9" /></Icon>
        <Icon box="0 0 13 9" className="ml-[5px] h-[9px] w-[13px]"><rect x=".5" y="1" width="10.500" height="7" rx="1.500" /><path d="M2 2.500h4v4H2z" fill="currentColor" stroke="none" /><path d="M12.300 3v3" /></Icon>
        <div className="ml-[12px] flex w-[41px] flex-col items-end gap-[3px] text-[9px]">
          <span>9:06 PM</span>
          <span>9/15/2022</span>
        </div>
        <Icon box="0 0 12 13" className="ml-[6px] h-[13px] w-3"><path d="M1.500 9.500l1-2V5q.5-3 3.500-3.500 3 .5 3.500 3.500v2.500l1 2zM4.500 10.500h3Q7 12 6 12t-1.500-1.500z" fill="#222" stroke="none" /><path d="M8 1h3L8 3.500h3M5 4h2L5 6.500h2" stroke="#555" strokeWidth=".8" /></Icon>
      </div>
    </div>
  );
}

export default function App() {
  return (
    <div className="flex h-screen flex-col overflow-hidden border-l border-[#c0c0c0] bg-[#f3f2f1] font-['Open_Sans','Noto_Sans',sans-serif]">
      <VoiceBar />
      <TitleBar />
      <TabRow />
      <Ribbon />
      <DocumentArea />
      <StatusBar />
      <Taskbar />
    </div>
  );
}
